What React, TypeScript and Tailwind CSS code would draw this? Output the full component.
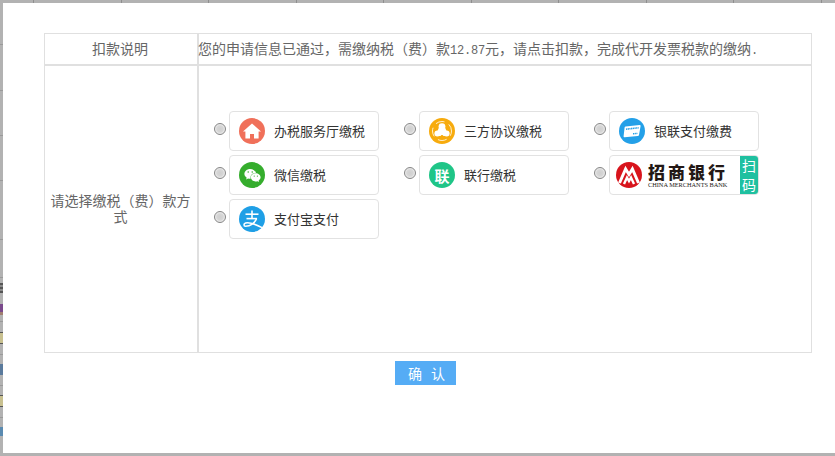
import { ReactNode } from "react";
import { FaWeixin } from "react-icons/fa";

const cjk = "font-['Noto_Sans_CJK_SC','Liberation_Sans',sans-serif]";

function HouseIcon() {
  return (
    <svg viewBox="0 0 26 26" className="w-[26px] h-[26px]">
      <circle cx="13" cy="13" r="13" fill="#f0705a" />
      <path d="M13 5.5 L22 13.6 L19.6 13.6 L19.6 20.5 L15 20.5 L15 16 L11 16 L11 20.5 L6.4 20.5 L6.4 13.6 L4 13.6 Z" fill="#fff" />
    </svg>
  );
}

function AgreementIcon() {
  return (
    <svg viewBox="0 0 26 26" className="w-[26px] h-[26px]">
      <circle cx="13" cy="13" r="13" fill="#f7ab0d" />
      <circle cx="13" cy="13" r="9.5" fill="none" stroke="#fff" strokeWidth="0.8" strokeDasharray="9 5" strokeDashoffset="4" />
      <circle cx="13" cy="8.6" r="3.4" fill="#fff" />
      <circle cx="8.4" cy="15.6" r="3" fill="#fff" />
      <circle cx="17.6" cy="15.6" r="3" fill="#fff" />
      <path d="M10 9.5 L16 9.5 L18 14 L16 18 L10 18 L8 14 Z" fill="#fff" />
      <circle cx="13" cy="18.4" r="1.4" fill="#f7ab0d" />
    </svg>
  );
}

function UnionPayIcon() {
  return (
    <svg viewBox="0 0 26 26" className="w-[26px] h-[26px]">
      <circle cx="13" cy="13" r="13" fill="#23a0e8" />
      <path d="M6.6 8.6 L20.6 7 Q21.8 6.9 21.6 8 L20 17 Q19.8 17.9 18.8 18 L5.6 19.2 Q4.4 19.3 4.6 18.2 L5.6 9.6 Q5.7 8.7 6.6 8.6 Z" fill="#fff" />
      <path d="M7 11.2 L19.6 9.8" stroke="#23a0e8" strokeWidth="1.6" strokeDasharray="1.2 0.5" />
      <path d="M14 15.8 L18.4 15.4" stroke="#23a0e8" strokeWidth="1.4" strokeDasharray="1.2 0.5" />
    </svg>
  );
}

function WechatIcon() {
  return (
    <div className="w-[26px] h-[26px] rounded-full bg-[#35ad2d] flex items-center justify-center text-white">
      <FaWeixin size={17} />
    </div>
  );
}

function LianIcon() {
  return (
    <div className={`w-[26px] h-[26px] rounded-full bg-[#1fc587] flex items-center justify-center text-white text-[15px] font-bold leading-none ${cjk}`}>
      联
    </div>
  );
}

function AlipayIcon() {
  return (
    <svg viewBox="0 0 26 26" className="w-[26px] h-[26px]">
      <circle cx="13" cy="13" r="13" fill="#1f9fe6" />
      <g fill="none" stroke="#fff" strokeWidth="1.6">
        <path d="M6.5 8.2 H19.5" />
        <path d="M13 4.5 V12.6" />
        <path d="M7.5 12.6 H18" />
        <path d="M17.6 12.6 C16 17 11.5 20.2 6.4 20.2 C4.6 20.2 4.4 17.6 6.6 17 C10.6 16 17 18.6 23 21.6" />
      </g>
    </svg>
  );
}

function MerchantsLogo() {
  return (
    <svg viewBox="0 0 26 26" className="w-[26px] h-[26px] shrink-0">
      <circle cx="13" cy="13" r="13" fill="#d8141c" />
      <path d="M3.5 21 L9.6 7 L13 12.5 L16.4 7 L22.5 21" fill="none" stroke="#fff" strokeWidth="3" strokeLinejoin="miter" />
      <path d="M8 22 L11 15.5 L13 19 L15 15.5 L18 22" fill="none" stroke="#fff" strokeWidth="2.4" strokeLinejoin="miter" />
    </svg>
  );
}

function PayCard({ icon, label }: { icon: ReactNode; label: string }) {
  return (
    <div className="w-[150px] h-[40px] rounded-[4px] border border-[#e2e2e2] bg-white flex items-center pl-[9px] gap-[9px]">
      {icon}
      <span className={`text-[13px] text-[#333] ${cjk}`}>{label}</span>
    </div>
  );
}

function MerchantsCard() {
  return (
    <div className="w-[150px] h-[40px] rounded-[4px] border border-[#e2e2e2] bg-white flex items-center pl-[6px] overflow-hidden">
      <MerchantsLogo />
      <div className="ml-[6px] w-[92px] flex flex-col">
        <span className="text-[17px] leading-[19px] font-black tracking-[3px] text-[#231815] font-['Noto_Sans_CJK_SC',serif]">招商银行</span>
        <span className="text-[6.3px] leading-[7px] whitespace-nowrap text-[#231815] font-['Liberation_Serif',serif]">CHINA MERCHANTS BANK</span>
      </div>
      <div className={`w-[18px] h-[38px] bg-[#1fc0a0] text-white text-[14px] leading-[19px] text-center ${cjk}`}>
        扫<br />码
      </div>
    </div>
  );
}

function PayOption({ children, checkedName }: { children: ReactNode; checkedName: string }) {
  return (
    <label className="flex items-start gap-[3px] pl-[15px]">
      <input
        type="radio"
        name={checkedName}
        className="appearance-none mt-[12px] w-[12px] h-[12px] rounded-full border border-[#858585] bg-[radial-gradient(circle,#cfcfcf_0%,#d6d6d6_45%,#f2f2f2_75%,#c4c4c4_100%)]"
      />
      {children}
    </label>
  );
}

const topCells = [34, 88, 87, 88, 87, 88, 87, 88, 87, 88];

// page behind the dialog, as it shows in the 3px strip on the left
const leftStrip: [number, string][] = [
  [41, "#b2b2b2"], [1, "#9a9a9a"], [45, "#b2b2b2"], [1, "#9a9a9a"], [44, "#b2b2b2"], [1, "#9a9a9a"],
  [44, "#b2b2b2"], [1, "#9a9a9a"], [58, "#b2b2b2"], [1, "#9a9a9a"], [37, "#b2b2b2"], [1, "#9a9a9a"],
  [5, "#b2b2b2"], [2, "#555555"], [2, "#8a8a8a"], [2, "#555555"], [2, "#8a8a8a"], [2, "#555555"],
  [11, "#b2b2b2"], [8, "#7a4a8c"], [3, "#a08070"], [6, "#b2b2b2"], [1, "#9a9a9a"], [10, "#b2b2b2"],
  [1, "#555555"], [10, "#c8c090"], [1, "#555555"], [10, "#b2b2b2"], [1, "#9a9a9a"], [9, "#b2b2b2"],
  [11, "#5a7a9c"], [10, "#b2b2b2"], [1, "#9a9a9a"], [9, "#b2b2b2"], [1, "#555555"], [10, "#c8c090"],
  [1, "#555555"], [10, "#b2b2b2"], [1, "#9a9a9a"], [9, "#b2b2b2"], [9, "#5a8ab0"],
];

export default function App() {
  const option = (icon: ReactNode, label: string) => (
    <PayOption key={label} checkedName="payType">
      <PayCard icon={icon} label={label} />
    </PayOption>
  );

  return (
    <div className="w-[835px] h-[456px] bg-[#b2b2b2] flex flex-col overflow-hidden">
      <div className="h-[3px] flex shrink-0">
        {topCells.map((w, i) => (
          <div key={i} className="border-r border-[#8f8f8f]" style={{ width: w }} />
        ))}
      </div>
      <div className="flex h-[450px] shrink-0">
        <div className="w-[3px] shrink-0 flex flex-col overflow-hidden">
          {leftStrip.map(([h, color], i) => (
            <div key={i} className="shrink-0" style={{ height: h, backgroundColor: color }} />
          ))}
        </div>
        <div className="flex-1 bg-white pt-[30px] pl-[41px] pr-[23px]">
          <div className={`w-[768px] border border-[#e0e0e0] text-[14px] text-[#666] ${cjk}`}>
            <div className="h-[32px] flex border-b-2 border-[#e0e0e0]">
              <div className="w-[154px] shrink-0 border-r-2 border-[#e0e0e0] flex items-center justify-center pb-[2px] pr-[2px]">扣款说明</div>
              <div className="flex items-center whitespace-nowrap pb-[1px]">
                <span className="-ml-[1px]">
                  您的申请信息已通过，需缴纳税（费）款
                  <span className="font-['Liberation_Mono',monospace] text-[12px] tracking-[-0.2px]">12.87</span>
                  元，请点击扣款，完成代开发票税款的缴纳
                  <span className="font-['Liberation_Mono',monospace] text-[12px]">.</span>
                </span>
              </div>
            </div>
            <div className="h-[286px] flex">
              <div className="w-[154px] shrink-0 border-r-2 border-[#e0e0e0] flex items-center justify-center text-center px-[5px] pb-[2px] pr-[6px] leading-[16px]">
                请选择缴税（费）款方式
              </div>
              <div className="grid grid-cols-[190px_190px_190px] auto-rows-[40px] gap-y-[4px] pt-[45px]">
                {option(<HouseIcon />, "办税服务厅缴税")}
                {option(<AgreementIcon />, "三方协议缴税")}
                {option(<UnionPayIcon />, "银联支付缴费")}
                {option(<WechatIcon />, "微信缴税")}
                {option(<LianIcon />, "联行缴税")}
                <PayOption checkedName="payType">
                  <MerchantsCard />
                </PayOption>
                {option(<AlipayIcon />, "支付宝支付")}
              </div>
            </div>
          </div>
          <div className="flex justify-center w-[768px] pr-[5px] mt-[8px]">
            <button className={`w-[61px] h-[24px] bg-[#55acf5] text-white text-[14px] tracking-[3px] pl-[5px] leading-none ${cjk}`}>
              确 认
            </button>
          </div>
        </div>
      </div>
      <div className="h-[3px] shrink-0 bg-[#b2b2b2]" />
    </div>
  );
}
